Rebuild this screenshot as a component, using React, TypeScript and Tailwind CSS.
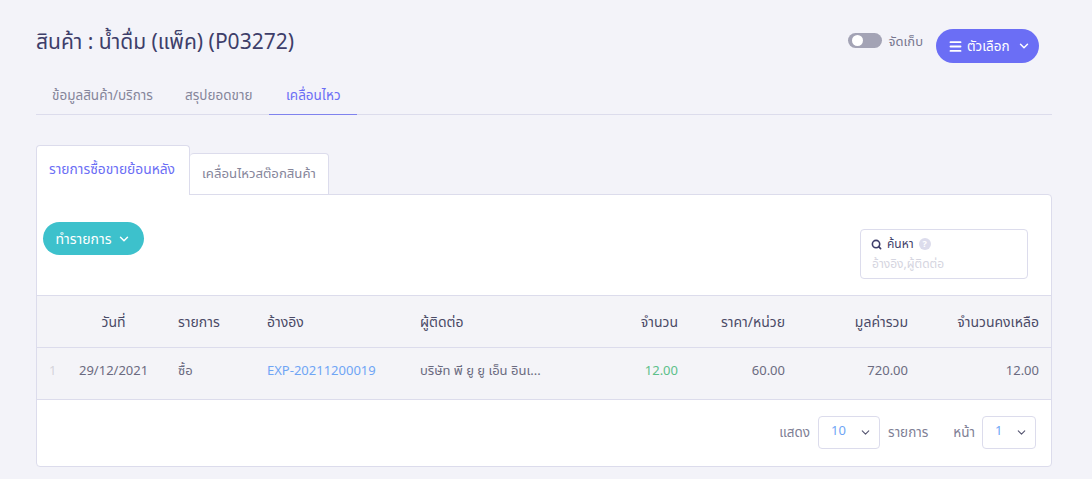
import { ChevronDown, Search, Menu } from "lucide-react";

const font = { fontFamily: '"Noto Sans", "Noto Sans Thai", "Lato", sans-serif' };
const cols = "grid grid-cols-[31px_79px_89px_153px_170px_119px_107px_123px_131px_12px]";

function Header() {
  return (
    <div className="flex justify-between h-[46px] items-start">
      <h1 className="text-[21px] leading-[26px] mt-[-1px] text-[#3e3e6a] font-normal whitespace-nowrap">สินค้า : น้ำดื่ม (แพ็ค) (P03272)</h1>
      <div className="flex items-start mr-[13px]">
        <div className="mt-[4px] w-[34px] h-[15px] rounded-full bg-[#a3a3b5] relative">
          <div className="absolute left-[4px] top-[2px] w-[11px] h-[11px] rounded-full bg-white" />
        </div>
        <span className="ml-[7px] mt-[3px] text-[13px] leading-[18px] text-[#77778f] whitespace-nowrap">จัดเก็บ</span>
        <button className="ml-[13px] w-[103px] h-[34px] rounded-full bg-[#6b6ef5] text-white text-[13.5px] flex items-center pl-[12px] gap-[4px] whitespace-nowrap">
          <Menu size={15} strokeWidth={3} />
          <span>ตัวเลือก</span>
          <ChevronDown size={14} strokeWidth={2.5} className="ml-[3px]" />
        </button>
      </div>
    </div>
  );
}

function NavTabs() {
  return (
    <div className="flex border-b border-[#dcdcec] h-[40px] text-[13.5px] whitespace-nowrap">
      <div className="px-[16px] w-[133px] pt-[10px] text-[#85859a]">ข้อมูลสินค้า/บริการ</div>
      <div className="px-[16px] w-[100px] pt-[10px] text-[#85859a]">สรุปยอดขาย</div>
      <div className="px-[17px] w-[88px] pt-[10px] text-[#6b6ef5] border-b border-[#7f82ee] h-[40px]">เคลื่อนไหว</div>
    </div>
  );
}

function SubTabs() {
  return (
    <div className="flex items-end h-[50px] mt-[30px] relative z-10 whitespace-nowrap">
      <div className="w-[154px] h-[50px] bg-white border border-b-0 border-[#dcdcec] rounded-t-[4px] pl-[12px] pt-[13px] text-[#6b6ef5] text-[13.8px]">รายการซื้อขายย้อนหลัง</div>
      <div className="w-[139px] h-[42px] bg-white border border-l-0 border-[#dcdcec] rounded-t-[4px] text-center pt-[10px] text-[#85859a] text-[13.2px]">เคลื่อนไหวสต๊อกสินค้า</div>
    </div>
  );
}

const head = "text-[14px] text-[#4a4a66] whitespace-nowrap";

function Table() {
  return (
    <div className="bg-[#f4f4f8] border-y border-[#dcdcec]">
      <div className={`${cols} h-[52px] items-center border-b border-[#dcdcec]`}>
        <div />
        <div className={`${head} text-center pl-[12px]`}>วันที่</div>
        <div className={`${head} pl-[31px]`}>รายการ</div>
        <div className={`${head} pl-[31px]`}>อ้างอิง</div>
        <div className={`${head} pl-[31px]`}>ผู้ติดต่อ</div>
        <div className={`${head} text-right`}>จำนวน</div>
        <div className={`${head} text-right`}>ราคา/หน่วย</div>
        <div className={`${head} text-right`}>มูลค่ารวม</div>
        <div className={`${head} text-right`}>จำนวนคงเหลือ</div>
        <div />
      </div>
      <div className={`${cols} h-[51px] items-center pb-[6px] text-[13px] text-[#6b6b80]`}>
        <div className="pl-[12px] text-[#d5d5dc]">1</div>
        <div className="pl-[11px] whitespace-nowrap">29/12/2021</div>
        <div className="pl-[31px]">ซื้อ</div>
        <div className="pl-[31px] text-[#6fa5f5] whitespace-nowrap">EXP-20211200019</div>
        <div className="pl-[31px] whitespace-nowrap">บริษัท พี ยู ยู เอ็น อินเ...</div>
        <div className="text-right text-[#5cc08a]">12.00</div>
        <div className="text-right">60.00</div>
        <div className="text-right">720.00</div>
        <div className="text-right">12.00</div>
        <div />
      </div>
    </div>
  );
}

function Pager({ value, width }: { value: string; width: string }) {
  return (
    <div className={`${width} h-[33px] bg-white border border-[#dcdcec] rounded-[4px] flex justify-between items-center pl-[12px] pr-[7px]`}>
      <span className="text-[13px] text-[#6fa5f5] mt-[-4px]">{value}</span>
      <ChevronDown size={13} strokeWidth={2} className="text-[#555570]" />
    </div>
  );
}

export default function App() {
  return (
    <div className="w-[1092px] h-[479px] overflow-hidden bg-[#f3f3f9] pl-[36px] pt-[29px] pr-[40px]" style={font}>
      <Header />
      <NavTabs />
      <SubTabs />
      <div className="bg-white border border-[#dcdcec] rounded-b-[4px] rounded-tr-[4px] h-[273px] mt-[-1px]">
        <div className="h-[100px] flex justify-between items-start pt-[27px] pl-[6px] pr-[23px]">
          <button className="w-[101px] h-[33px] rounded-full bg-[#3dc1cc] text-white text-[14px] flex items-center justify-center gap-[6px] whitespace-nowrap">
            ทำรายการ
            <ChevronDown size={14} strokeWidth={2.5} />
          </button>
          <div className="w-[168px] h-[50px] mt-[7px] border border-[#dcdcec] rounded-[4px] px-[10px] pt-[5px]">
            <div className="flex items-center gap-[5px] text-[12px] leading-[18px] text-[#3e3e6a]">
              <Search size={11} strokeWidth={3.5} />
              <span>ค้นหา</span>
              <span className="w-[12px] h-[12px] rounded-full bg-[#dcdcec] text-white text-[9px] leading-[12px] text-center font-bold">?</span>
            </div>
            <div className="text-[12px] leading-[18px] mt-[2px] pl-[1px] text-[#d5d5e0] whitespace-nowrap">อ้างอิง,ผู้ติดต่อ</div>
          </div>
        </div>
        <Table />
        <div className="flex items-center justify-end h-[65px] pr-[15px] text-[13.5px] text-[#808095] whitespace-nowrap">
          <span>แสดง</span>
          <div className="ml-[8px]"><Pager value="10" width="w-[62px]" /></div>
          <span className="ml-[8px]">รายการ</span>
          <span className="ml-[25px]">หน้า</span>
          <div className="ml-[7px]"><Pager value="1" width="w-[54px]" /></div>
        </div>
      </div>
    </div>
  );
}
